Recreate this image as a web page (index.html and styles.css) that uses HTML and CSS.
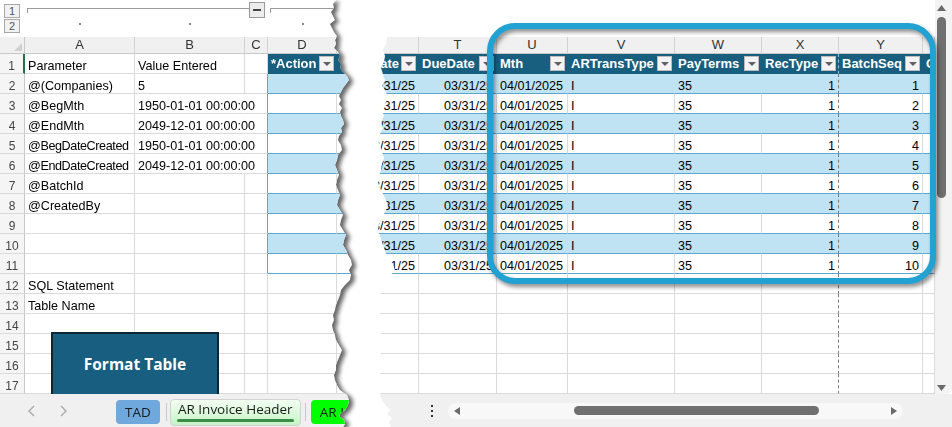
FILE: index.html
```html
<!DOCTYPE html>
<html lang="en">
<head>
    <meta charset="UTF-8">
    <title>AR Invoice Header</title>
    <link rel="stylesheet" href="styles.css">
</head>
<body>

<div class="screen">

    <!-- left sheet: parameters -->
    <div class="left-wrap">
        <div class="sheet-left">
            <div class="outline">
                <div class="levels">
                    <div class="lvl">1</div>
                    <div class="lvl">2</div>
                </div>
                <div class="bracket-row">
                    <span class="bracket first"></span>
                    <span class="minus"><i></i></span>
                    <span class="bracket second"></span>
                </div>
                <div class="dot-cell col-a"><i></i></div>
                <div class="dot-cell col-b"><i></i></div>
                <div class="dot-cell col-d"><i></i></div>
            </div>

            <div class="grid-wrap">
                <div class="grid gl">
                    <div class="corner"></div><div class="ch">A</div><div class="ch">B</div><div class="ch">C</div><div class="ch">D</div><div class="ch"></div>

                    <div class="rh sel">1</div><div>Parameter</div><div>Value Entered</div><div></div><div class="th"><span>*Action</span><i class="fb"></i></div><div class="th"></div>
                    <div class="rh">2</div><div>@(Companies)</div><div>5</div><div class="tl"></div><div class="t b"></div><div class="t b"></div>
                    <div class="rh">3</div><div>@BegMth</div><div class="spill">1950-01-01 00:00:00</div><div class="tl"></div><div class="t"></div><div class="t"></div>
                    <div class="rh">4</div><div>@EndMth</div><div class="spill">2049-12-01 00:00:00</div><div class="tl"></div><div class="t b"></div><div class="t b"></div>
                    <div class="rh">5</div><div class="tight">@BegDateCreated</div><div class="spill">1950-01-01 00:00:00</div><div class="tl"></div><div class="t"></div><div class="t"></div>
                    <div class="rh">6</div><div class="tight">@EndDateCreated</div><div class="spill">2049-12-01 00:00:00</div><div class="tl"></div><div class="t b"></div><div class="t b"></div>
                    <div class="rh">7</div><div>@BatchId</div><div></div><div class="tl"></div><div class="t"></div><div class="t"></div>
                    <div class="rh">8</div><div>@CreatedBy</div><div></div><div class="tl"></div><div class="t b"></div><div class="t b"></div>
                    <div class="rh">9</div><div></div><div></div><div class="tl"></div><div class="t"></div><div class="t"></div>
                    <div class="rh">10</div><div></div><div></div><div class="tl"></div><div class="t b"></div><div class="t b"></div>
                    <div class="rh">11</div><div></div><div></div><div class="tl"></div><div class="t"></div><div class="t"></div>
                    <div class="rh">12</div><div>SQL Statement</div><div></div><div></div><div></div><div></div>
                    <div class="rh">13</div><div>Table Name</div><div></div><div></div><div></div><div></div>
                    <div class="rh">14</div><div></div><div></div><div></div><div></div><div></div>
                    <div class="rh">15</div><div></div><div></div><div></div><div></div><div></div>
                    <div class="rh">16</div><div></div><div></div><div></div><div></div><div></div>
                    <div class="rh">17</div><div></div><div></div><div></div><div></div><div></div>
                </div>
                <div class="format-btn">Format Table</div>
            </div>

            <div class="tabbar">
                <svg class="nav" width="10" height="14" viewBox="0 0 10 14"><path d="M7 2 L2 7 L7 12" fill="none" stroke="#a9a9a9" stroke-width="1.4"/></svg>
                <svg class="nav next" width="10" height="14" viewBox="0 0 10 14"><path d="M3 2 L8 7 L3 12" fill="none" stroke="#a9a9a9" stroke-width="1.4"/></svg>
                <div class="tab tad">TAD</div>
                <span class="sep"></span>
                <div class="tab cur"><span>AR Invoice Header</span><i class="uline"></i></div>
                <span class="sep sep2"></span>
                <div class="tab lime">AR Lines</div>
            </div>
        </div>
    </div>

    <!-- right sheet: table columns -->
    <div class="sheet-right">
        <div class="right-top">
            <div class="right-main">
                <div class="blank"></div>
                <div class="grid gr">
                    <div class="ch"></div><div class="ch">T</div><div class="ch">U</div><div class="ch">V</div><div class="ch">W</div><div class="ch">X</div><div class="ch">Y</div><div class="ch"></div>

                    <div class="th end"><span>TransDate</span><i class="fb"></i></div><div class="th"><span>DueDate</span><i class="fb"></i></div><div class="th"><span>Mth</span><i class="fb"></i></div><div class="th"><span>ARTransType</span><i class="fb"></i></div><div class="th"><span>PayTerms</span><i class="fb"></i></div><div class="th pb"><span>RecType</span><i class="fb"></i></div><div class="th"><span>BatchSeq</span><i class="fb"></i></div><div class="th"><span>Co</span></div>

                    <div class="t b r">03/31/25</div><div class="t b r">03/31/25</div><div class="t b">04/01/2025</div><div class="t b">I</div><div class="t b">35</div><div class="t b r pb">1</div><div class="t b r">1</div><div class="t b"></div>
                    <div class="t r">03/31/25</div><div class="t r">03/31/25</div><div class="t">04/01/2025</div><div class="t">I</div><div class="t">35</div><div class="t r pb">1</div><div class="t r">2</div><div class="t"></div>
                    <div class="t b r">03/31/25</div><div class="t b r">03/31/25</div><div class="t b">04/01/2025</div><div class="t b">I</div><div class="t b">35</div><div class="t b r pb">1</div><div class="t b r">3</div><div class="t b"></div>
                    <div class="t r">03/31/25</div><div class="t r">03/31/25</div><div class="t">04/01/2025</div><div class="t">I</div><div class="t">35</div><div class="t r pb">1</div><div class="t r">4</div><div class="t"></div>
                    <div class="t b r">03/31/25</div><div class="t b r">03/31/25</div><div class="t b">04/01/2025</div><div class="t b">I</div><div class="t b">35</div><div class="t b r pb">1</div><div class="t b r">5</div><div class="t b"></div>
                    <div class="t r">03/31/25</div><div class="t r">03/31/25</div><div class="t">04/01/2025</div><div class="t">I</div><div class="t">35</div><div class="t r pb">1</div><div class="t r">6</div><div class="t"></div>
                    <div class="t b r">03/31/25</div><div class="t b r">03/31/25</div><div class="t b">04/01/2025</div><div class="t b">I</div><div class="t b">35</div><div class="t b r pb">1</div><div class="t b r">7</div><div class="t b"></div>
                    <div class="t r">03/31/25</div><div class="t r">03/31/25</div><div class="t">04/01/2025</div><div class="t">I</div><div class="t">35</div><div class="t r pb">1</div><div class="t r">8</div><div class="t"></div>
                    <div class="t b r">03/31/25</div><div class="t b r">03/31/25</div><div class="t b">04/01/2025</div><div class="t b">I</div><div class="t b">35</div><div class="t b r pb">1</div><div class="t b r">9</div><div class="t b"></div>
                    <div class="t r">03/31/25</div><div class="t r">03/31/25</div><div class="t">04/01/2025</div><div class="t">I</div><div class="t">35</div><div class="t r pb">1</div><div class="t r">10</div><div class="t"></div>

                    <div></div><div></div><div></div><div></div><div></div><div class="pb"></div><div></div><div></div>
                    <div></div><div></div><div></div><div></div><div></div><div class="pb"></div><div></div><div></div>
                    <div></div><div></div><div></div><div></div><div></div><div class="pb"></div><div></div><div></div>
                    <div></div><div></div><div></div><div></div><div></div><div class="pb"></div><div></div><div></div>
                    <div></div><div></div><div></div><div></div><div></div><div class="pb"></div><div></div><div></div>
                    <div></div><div></div><div></div><div></div><div></div><div class="pb"></div><div></div><div></div>
                </div>
            </div>
            <div class="vscroll">
                <svg width="9" height="6" viewBox="0 0 9 6"><path d="M0 6 L4.5 0 L9 6 Z" fill="#6a6a6a"/></svg>
                <div class="vthumb"></div>
                <svg class="down" width="9" height="6" viewBox="0 0 9 6"><path d="M0 0 L9 0 L4.5 6 Z" fill="#6a6a6a"/></svg>
            </div>
        </div>
        <div class="hbar">
            <svg class="kebab" width="4" height="14" viewBox="0 0 4 14"><rect x="1" y="1" width="2" height="2" fill="#333"/><rect x="1" y="6" width="2" height="2" fill="#333"/><rect x="1" y="11" width="2" height="2" fill="#333"/></svg>
            <div class="htrack">
                <svg width="6" height="8" viewBox="0 0 6 8"><path d="M6 0 L0 4 L6 8 Z" fill="#6a6a6a"/></svg>
                <div class="hthumb"></div>
                <svg class="right-arrow" width="6" height="8" viewBox="0 0 6 8"><path d="M0 0 L6 4 L0 8 Z" fill="#6a6a6a"/></svg>
            </div>
        </div>
    </div>

    <!-- callout round the new columns -->
    <div class="focus-ring"></div>
</div>

</body>
</html>
```

FILE: styles.css
```css
* {
    box-sizing: border-box;
}
body {
    margin: 0;
    background: #fff;
    font-family: "Liberation Sans", Arial, sans-serif;
    color: #000;
}
.screen {
    position: relative;
    display: flex;
    width: 952px;
    height: 427px;
    overflow: hidden;
    background: #fff;
}

/* torn paper edges */
.left-wrap {
    flex: none;
    width: 356px;
    filter: drop-shadow(4px 2px 2px rgba(0, 0, 0, 0.6));
}
.sheet-left {
    width: 356px;
    height: 427px;
    background: #fff;
    display: flex;
    flex-direction: column;
    clip-path: polygon(0 0, 336px 0, 333px 4px, 334px 8px, 331px 12px, 333px 16px, 335px 20px, 330px 24px, 332px 28px, 334px 32px, 337px 36px, 335px 40px, 336px 44px, 334px 48px, 338px 52px, 340px 56px, 338px 60px, 341px 64px, 340px 68px, 343px 72px, 347px 76px, 349px 80px, 346px 84px, 343px 88px, 341px 92px, 339px 96px, 341px 100px, 339px 104px, 342px 108px, 340px 112px, 341px 116px, 343px 120px, 344px 124px, 341px 128px, 342px 132px, 339px 136px, 338px 140px, 341px 145px, 342px 150px, 338px 155px, 337px 160px, 335px 165px, 337px 170px, 339px 175px, 337px 180px, 336px 185px, 338px 190px, 340px 195px, 338px 200px, 337px 205px, 340px 210px, 343px 215px, 341px 220px, 340px 225px, 343px 230px, 346px 235px, 344px 240px, 343px 245px, 346px 250px, 348px 255px, 351px 260px, 352px 265px, 349px 270px, 351px 275px, 350px 280px, 345px 285px, 341px 290px, 340px 295px, 338px 300px, 336px 305px, 335px 310px, 333px 315px, 334px 320px, 332px 325px, 333px 330px, 335px 335px, 336px 340px, 339px 345px, 342px 350px, 340px 355px, 338px 360px, 336px 365px, 336px 370px, 334px 375px, 335px 380px, 337px 385px, 340px 390px, 347px 395px, 349px 400px, 348px 405px, 345px 410px, 341px 413px, 339px 416px, 344px 420px, 345px 424px, 343px 427px, 0 427px);
}
.sheet-right {
    flex: none;
    margin-left: auto;
    width: 574px;
    height: 427px;
    background: #fff;
    display: flex;
    flex-direction: column;
    clip-path: polygon(10px 0, 100% 0, 100% 100%, 13px 100%, 11px 422px, 14px 418px, 9px 414px, 12px 410px, 8px 406px, 4px 400px, 2px 396px, 3px 390px, 1px 384px, 3px 378px, 2px 372px, 0 366px, 2px 360px, 3px 354px, 1px 348px, 2px 342px, 4px 336px, 2px 330px, 1px 324px, 3px 318px, 2px 312px, 0 306px, 2px 300px, 3px 294px, 4px 288px, 7px 282px, 12px 276px, 17px 270px, 15px 265px, 12px 260px, 8px 254px, 6px 248px, 4px 242px, 2px 236px, 0 230px, 1px 224px, 4px 218px, 7px 212px, 10px 206px, 8px 200px, 5px 194px, 2px 188px, 0 182px, 1px 176px, 3px 170px, 4px 164px, 6px 158px, 4px 152px, 2px 146px, 0 140px, 2px 134px, 5px 128px, 3px 122px, 6px 116px, 4px 110px, 7px 104px, 10px 98px, 8px 92px, 4px 86px, 7px 80px, 5px 74px, 3px 68px, 6px 62px, 7px 56px, 5px 50px, 8px 44px, 9px 38px);
}

/* outline (grouping) strip */
.outline {
    height: 37px;
    display: grid;
    grid-template-columns: 25px 110px 110px 23px 69px 19px;
    grid-template-rows: 18px 19px;
}
.levels {
    grid-row: 1 / 3;
    grid-column: 1;
    display: flex;
    flex-direction: column;
    gap: 1px;
    padding: 4px 0 0 4px;
}
.lvl {
    width: 16px;
    height: 14px;
    border: 1px solid #a8a8a8;
    background: #f2f2f2;
    color: #555;
    font-size: 11px;
    line-height: 12px;
    text-align: center;
}
.bracket-row {
    grid-column: 2 / 7;
    grid-row: 1;
    display: flex;
    align-items: flex-start;
    padding-left: 2px;
}
.bracket {
    height: 5px;
    margin-top: 8px;
    border-top: 1px solid #9a9a9a;
    border-left: 1px solid #9a9a9a;
}
.bracket.first {
    width: 222px;
}
.bracket.second {
    flex: 1;
    margin-left: 5px;
}
.minus {
    width: 16px;
    height: 16px;
    margin-top: 2px;
    border: 1px solid #9a9a9a;
    background: #ececec;
    display: flex;
    align-items: center;
    justify-content: center;
}
.minus i {
    width: 8px;
    height: 2px;
    background: #444;
}
.dot-cell {
    grid-row: 2;
    display: flex;
    justify-content: center;
    padding-top: 5px;
}
.dot-cell i {
    width: 2px;
    height: 2px;
    background: #8a8a8a;
}
.col-a { grid-column: 2; }
.col-b { grid-column: 3; }
.col-d { grid-column: 5; }

/* cell grid */
.grid-wrap {
    position: relative;
    height: 357px;
    overflow: hidden;
}
.grid {
    display: grid;
    grid-template-rows: 17px repeat(17, 20px);
    font-size: 12.6px;
}
.gl {
    grid-template-columns: 25px 110px 110px 23px 69px 19px;
}
.gr {
    grid-template-columns: 41px 78px 71px 107px 87px 77px 84px 12px;
}
.grid > div {
    border-right: 1px solid #dadada;
    border-bottom: 1px solid #dadada;
    padding: 0 3px;
    line-height: 24px;
    white-space: nowrap;
    overflow: hidden;
}
.grid > .ch {
    background: #f0f0f0;
    border-right-color: #d2d2d2;
    border-bottom-color: #c8c8c8;
    color: #333;
    font-size: 13px;
    line-height: 16px;
    text-align: center;
}
.grid > .corner {
    position: relative;
    background: #f0f0f0;
    border-right-color: #c8c8c8;
    border-bottom-color: #c8c8c8;
}
.grid > .corner::after {
    content: "";
    position: absolute;
    right: 2px;
    bottom: 2px;
    border-left: 8px solid transparent;
    border-bottom: 8px solid #d0d0d0;
}
.grid > .rh {
    padding: 0;
    background: #f5f5f5;
    border-right-color: #c8c8c8;
    color: #444;
    font-size: 12px;
    text-align: center;
}
.grid > .rh.sel {
    border-right: 2px solid #217346;
}
.grid > .tight {
    letter-spacing: -0.4px;
}
/* text running on into the empty cell beside it */
.grid > .spill {
    overflow: visible;
    border-right-color: transparent;
}
.grid > .th {
    display: flex;
    align-items: center;
    justify-content: space-between;
    padding: 0 2px 0 3px;
    background: #185e7f;
    border-right-color: #185e7f;
    border-bottom-color: #185e7f;
    color: #fff;
    font-size: 13px;
    font-weight: bold;
    line-height: normal;
}
.grid > .th.end {
    justify-content: flex-end;
    gap: 2px;
}
.grid > .t {
    border-bottom-color: #5aa7d6;
}
.grid > .b {
    background: #bfe3f3;
    border-right-color: #bfe3f3;
}
.grid > .tl {
    border-right-color: #5aa7d6;
}
.grid > .r {
    display: flex;
    justify-content: flex-end;
}
.grid > .pb {
    border-right: 1px dashed #7a7a7a;
}
.grid > .th.pb {
    border-right: 1px dashed #a9bfcc;
}
.fb {
    flex: none;
    width: 15px;
    height: 15px;
    background: #f3f3f3;
    border: 1px solid #bdbdbd;
    display: flex;
    align-items: center;
    justify-content: center;
}
.fb::after {
    content: "";
    border-left: 4px solid transparent;
    border-right: 4px solid transparent;
    border-top: 4px solid #606060;
}

.format-btn {
    position: absolute;
    left: 51px;
    top: 295px;
    width: 168px;
    height: 64px;
    background: #175e80;
    border: 2px solid #0c2634;
    color: #fff;
    font-family: "Open Sans", sans-serif;
    font-size: 15.5px;
    font-weight: 700;
    display: flex;
    align-items: center;
    justify-content: center;
}

/* sheet tabs */
.tabbar {
    height: 33px;
    background: #f0f0f0;
    display: flex;
    align-items: center;
    padding-left: 27px;
    font-family: "Open Sans", sans-serif;
}
.nav {
    flex: none;
}
.nav.next {
    margin-left: 21px;
}
.tab {
    flex: none;
    margin-top: 3px;
    height: 24px;
    padding: 0 9px;
    border-radius: 4px;
    color: #1a1a1a;
    font-size: 13.5px;
    line-height: 24px;
}
.tab.tad {
    margin-left: 48px;
    background: #6fa8dc;
}
.sep {
    flex: none;
    width: 1px;
    height: 18px;
    margin: 3px 3px 0 6px;
    background: #c8c8c8;
}
.sep2 {
    margin: 3px 5px 0 4px;
}
.tab.cur {
    width: 131px;
    height: 27px;
    padding: 1px 0 0;
    border: 1px solid #d2d2d2;
    background: linear-gradient(#f2fff2, #c6f4c6);
    display: flex;
    flex-direction: column;
    align-items: center;
    line-height: 17px;
}
.uline {
    width: 117px;
    height: 3px;
    margin-top: 1px;
    border-radius: 2px;
    background: #3a8d44;
}
.tab.lime {
    width: 60px;
    background: #00ff00;
    overflow: hidden;
    white-space: nowrap;
}

/* right sheet scrollbars */
.right-top {
    display: flex;
    height: 394px;
}
.right-main {
    width: 557px;
}
.blank {
    height: 37px;
}
.vscroll {
    width: 17px;
    padding: 5px 4px 3px 0;
    background: #f3f3f3;
    border-bottom-right-radius: 6px;
    display: flex;
    flex-direction: column;
    align-items: center;
}
.vthumb {
    width: 9px;
    height: 181px;
    margin-top: 6px;
    border-radius: 5px;
    background: #707070;
}
.vscroll .down {
    margin-top: auto;
}
.hbar {
    height: 33px;
    background: #f0f0f0;
    display: flex;
    align-items: center;
}
.kebab {
    margin-left: 52px;
}
.htrack {
    width: 455px;
    height: 16px;
    margin-left: 14px;
    padding: 0 6px;
    border-radius: 8px;
    background: #f8f8f8;
    display: flex;
    align-items: center;
}
.hthumb {
    width: 245px;
    height: 9px;
    margin-left: 114px;
    border-radius: 5px;
    background: #707070;
}
.right-arrow {
    margin-left: auto;
}

/* blue callout */
.focus-ring {
    position: absolute;
    left: 487px;
    top: 23px;
    width: 449px;
    height: 261px;
    border: 6px solid #22a2d3;
    border-radius: 28px;
    filter: drop-shadow(2px 3px 2px rgba(0, 0, 0, 0.45));
    pointer-events: none;
}
```
